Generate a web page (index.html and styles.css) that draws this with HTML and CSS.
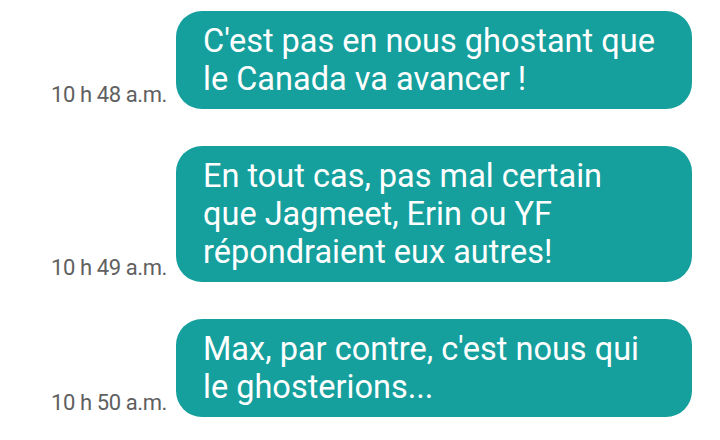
FILE: index.html
```html
<!DOCTYPE html>
<html lang="fr">
<head>
<meta charset="utf-8">
<title>Messages</title>
<link rel="stylesheet" href="styles.css">
</head>
<body>
<main class="thread">
  <div class="row">
    <span class="time">10 h 48 a.m.</span>
    <div class="bubble">C'est pas en nous ghostant que<br>le Canada va avancer !</div>
  </div>
  <div class="row">
    <span class="time">10 h 49 a.m.</span>
    <div class="bubble">En tout cas, pas mal certain<br>que Jagmeet, Erin ou YF<br>répondraient eux autres!</div>
  </div>
  <div class="row">
    <span class="time">10 h 50 a.m.</span>
    <div class="bubble">Max, par contre, c'est nous qui<br>le ghosterions...</div>
  </div>
</main>
</body>
</html>
```

FILE: styles.css
```css
html, body {
  margin: 0;
  padding: 0;
  background: #ffffff;
}

body {
  width: 720px;
  height: 440px;
  overflow: hidden;
  font-family: Roboto, "Noto Sans", sans-serif;
}

.thread {
  display: flex;
  flex-direction: column;
  gap: 37px;
  padding: 11px 28px 0 0;
}

.row {
  display: flex;
  align-items: flex-end;
  justify-content: flex-end;
  gap: 9px;
}

.time {
  font-size: 22px;
  line-height: 26px;
  margin-bottom: 1px;
  color: #606060;
  letter-spacing: -0.4px;
  white-space: nowrap;
}

.bubble {
  box-sizing: border-box;
  width: 516px;
  padding: 11px 20px 11px 27px;
  background: #15a09e;
  color: #ffffff;
  font-size: 32.5px;
  line-height: 38px;
  white-space: nowrap;
  border-radius: 26px;
}
```
